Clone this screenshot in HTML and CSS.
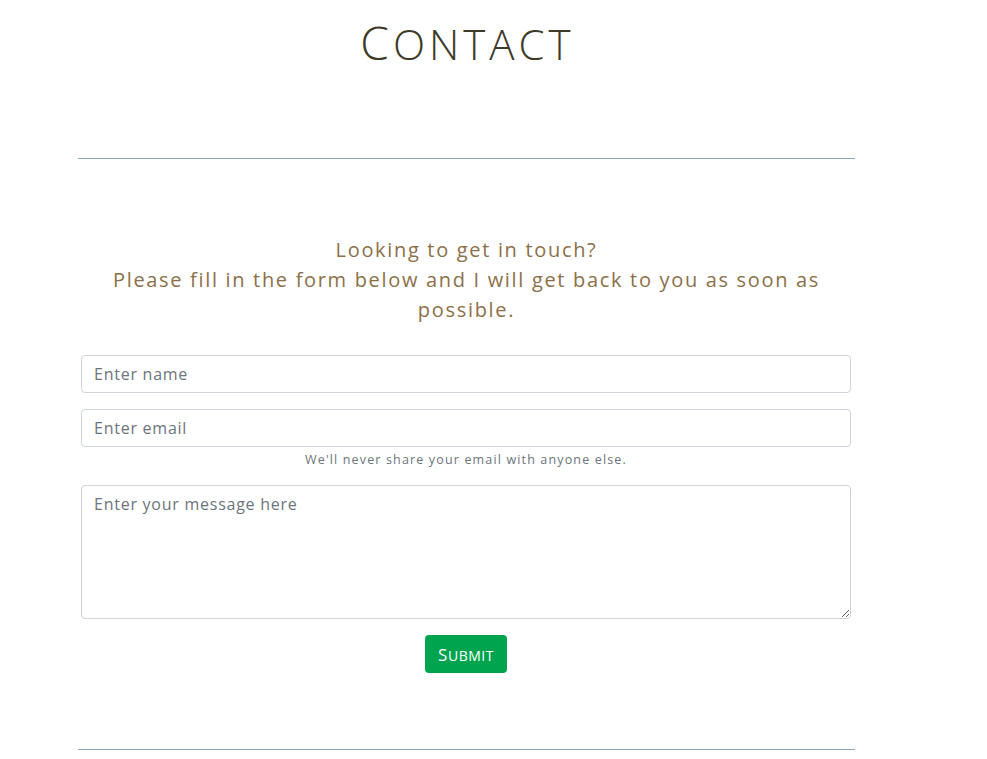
FILE: index.html
```html
<!DOCTYPE html>
<html lang="en">
<head>
<meta charset="utf-8">
<title>Contact</title>
<link rel="stylesheet" href="styles.css">
</head>
<body>
<main class="page">
  <h1 class="title"><span class="cap">C</span>ontact</h1>
  <hr class="rule rule-top">
  <p class="intro">Looking to get in touch?<br>Please fill in the form below and I will get back to you as soon as possible.</p>
  <form class="form">
    <input class="field" type="text" placeholder="Enter name">
    <div class="group">
      <input class="field" type="email" placeholder="Enter email">
      <small class="help">We'll never share your email with anyone else.</small>
    </div>
    <textarea class="field area" placeholder="Enter your message here"></textarea>
    <button class="submit" type="button"><span class="cap">S</span>ubmit</button>
  </form>
  <hr class="rule rule-bottom">
</main>
</body>
</html>
```

FILE: styles.css
```css
html, body {
  margin: 0;
  padding: 0;
  background: #ffffff;
}

.page {
  width: 777px;
  margin-left: 78px;
  display: flex;
  flex-direction: column;
}

.title {
  margin: 15px 0 0;
  padding-left: 2px;
  text-align: center;
  font-family: "Open Sans", "Noto Sans", sans-serif;
  font-weight: 300;
  font-size: 42px;
  line-height: 55px;
  text-transform: uppercase;
  letter-spacing: 4px;
  color: #3d3a27;
}

.title .cap {
  font-size: 46px;
}

.rule {
  width: 100%;
  margin: 0;
  border: 0;
  border-top: 1px solid #8aa6bb;
  height: 0;
}

.rule-top {
  margin-top: 87px;
}

.intro {
  margin: 76px 0 0;
  padding: 0 20px;
  text-align: center;
  font-family: "Open Sans", "Noto Sans", sans-serif;
  font-size: 20px;
  line-height: 30px;
  letter-spacing: 1.68px;
  color: #8c7049;
}

.form {
  display: flex;
  flex-direction: column;
  align-items: center;
  gap: 16px;
  margin-top: 30px;
  padding: 0 4px 0 3px;
}

.group {
  width: 100%;
  display: flex;
  flex-direction: column;
  align-items: center;
}

.field {
  box-sizing: border-box;
  width: 100%;
  height: 38px;
  padding: 6px 12px;
  border: 1px solid #ced4da;
  border-radius: 4px;
  font-family: "Open Sans", "Noto Sans", sans-serif;
  font-size: 16px;
  line-height: 24px;
  letter-spacing: 0.75px;
  color: #495057;
  background: #fff;
}

.field::placeholder {
  color: #6c757d;
  opacity: 1;
}

.area {
  height: 134px;
  resize: vertical;
}

.help {
  margin-top: 3px;
  font-family: "Open Sans", "Noto Sans", sans-serif;
  font-size: 12.5px;
  line-height: 19px;
  letter-spacing: 1.15px;
  color: #6c757d;
}

.submit {
  box-sizing: border-box;
  width: 82px;
  height: 38px;
  border: 0;
  border-radius: 4px;
  background: #00a44f;
  color: #ffffff;
  font-family: "Open Sans", "Noto Sans", sans-serif;
  font-size: 14px;
  text-transform: uppercase;
  letter-spacing: 0.5px;
  padding: 0;
}

.submit .cap {
  font-size: 17px;
}

.rule-bottom {
  margin-top: 76px;
}
```
